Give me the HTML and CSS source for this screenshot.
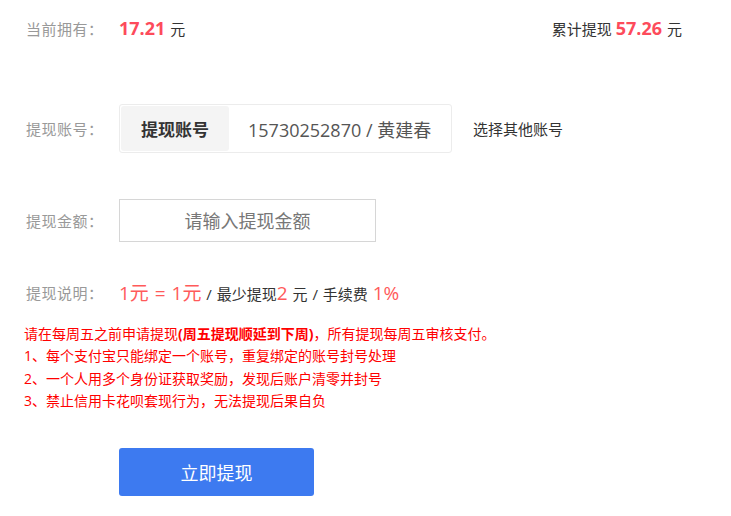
FILE: index.html
```html
<!DOCTYPE html>
<html lang="zh-CN">
<head>
  <meta charset="UTF-8">
  <meta name="viewport" content="width=device-width, initial-scale=1.0">
  <title>提现</title>
  <link rel="stylesheet" href="styles.css">
</head>
<body>
  <div class="withdraw">
    <div class="row row-balance">
      <span class="label">当前拥有：</span>
      <span class="money">17.21</span><span class="unit">元</span>
      <span class="total">累计提现 <span class="money">57.26</span><span class="unit">元</span></span>
    </div>

    <div class="row row-account">
      <span class="label">提现账号：</span>
      <div class="account-box">
        <span class="account-tag">提现账号</span>
        <span class="account-no">15730252870 / 黄建春</span>
      </div>
      <a class="other-account">选择其他账号</a>
    </div>

    <div class="row row-amount">
      <span class="label">提现金额：</span>
      <input class="amount-input" type="text" placeholder="请输入提现金额">
    </div>

    <div class="row row-desc">
      <span class="label">提现说明：</span>
      <span class="desc">
        <span class="hl">1元 = 1元</span> / 最少提现<span class="hl">2</span> 元 / 手续费 <span class="hl">1%</span>
      </span>
    </div>

    <ul class="notes">
      <li>请在每周五之前申请提现<b>(周五提现顺延到下周)</b>，所有提现每周五审核支付。</li>
      <li>1、每个支付宝只能绑定一个账号，重复绑定的账号封号处理</li>
      <li>2、一个人用多个身份证获取奖励，发现后账户清零并封号</li>
      <li>3、禁止信用卡花呗套现行为，无法提现后果自负</li>
    </ul>

    <div class="actions">
      <button class="btn-submit" type="button">立即提现</button>
    </div>
  </div>
</body>
</html>
```

FILE: styles.css
```css
/* General styles */
body {
  margin: 0;
  background-color: #fff;
  font-family: "Open Sans", "Noto Sans CJK SC", sans-serif;
  color: #333;
}

.withdraw {
  padding: 0 49px 0 26px;
}

/* Rows */
.row {
  display: flex;
  align-items: center;
}

.label {
  width: 93px;
  flex-shrink: 0;
  font-size: 15px;
  letter-spacing: 0.5px;
  color: #999;
}

.row-balance {
  height: 56px;
}

.money {
  font-size: 18px;
  font-weight: bold;
  color: #fd4b5b;
}

.unit {
  font-size: 15px;
  margin-left: 5px;
  color: #333;
}

.total {
  margin-left: auto;
  font-size: 15px;
  color: #333;
}

/* Account */
.row-account {
  margin-top: 48px;
}

.account-box {
  display: flex;
  align-items: center;
  width: 329px;
  height: 45px;
  padding: 1px;
  border: 1px solid #ececec;
  border-radius: 3px;
}

.account-tag {
  display: flex;
  align-items: center;
  justify-content: center;
  width: 108px;
  height: 100%;
  background-color: #f4f4f4;
  border-radius: 3px;
  font-size: 17px;
  font-weight: bold;
  color: #333;
}

.account-no {
  margin-left: 19px;
  font-size: 18px;
  color: #555;
}

.other-account {
  margin-left: 21px;
  font-size: 15px;
  color: #333;
}

/* Amount */
.row-amount {
  margin-top: 46px;
}

.amount-input {
  box-sizing: border-box;
  width: 257px;
  height: 43px;
  border: 1px solid #d6d6d6;
  text-align: center;
  font-family: inherit;
  font-size: 18px;
  outline: none;
}

.amount-input::placeholder {
  color: #777;
}

/* Description */
.row-desc {
  margin-top: 36px;
}

.desc {
  font-size: 15px;
  word-spacing: 1px;
  color: #333;
}

.hl {
  font-size: 19px;
  color: #ff5a5a;
}

/* Notes */
.notes {
  list-style: none;
  margin: 17px 0 0 -2px;
  padding: 0;
  font-size: 14px;
  line-height: 22.3px;
  color: #f00;
}

/* Button */
.actions {
  padding: 36px 0 0 93px;
}

.btn-submit {
  width: 195px;
  height: 48px;
  border: none;
  border-radius: 3px;
  background-color: #3d7af0;
  color: #fff;
  font-family: inherit;
  font-size: 18px;
  cursor: pointer;
}
```
